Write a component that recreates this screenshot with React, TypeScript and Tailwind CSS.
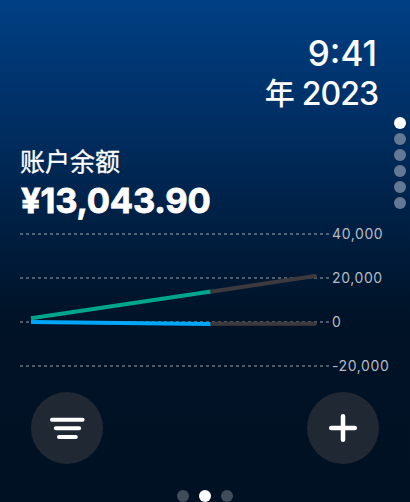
const axisLabels = ['40,000', '20,000', '0', '-20,000'];
const sideDots = [0, 1, 2, 3, 4, 5];
const pageDots = [0, 1, 2];

const StatusHeader = () => (
    <header className="h-[141px] pt-[32px] pr-[32px] flex flex-col items-end font-medium text-white">
        <div className="h-[42px] leading-[42px] text-[35px] tracking-[0px] pr-[1px]">9:41</div>
        <div className="h-[40px] leading-[39px] text-[32px] tracking-[-1px] flex">
            <span className="text-[30px]">年</span>
            <span className="ml-[8px]">2023</span>
        </div>
    </header>
);

const BalanceChart = () => (
    <div className="h-[162px] pl-5 flex">
        <svg className="w-[310px] h-[162px] shrink-0" viewBox="20 219 310 162" fill="none">
            {[234, 278, 322, 366].map((y) => (
                <path key={y} d={`M20 ${y}H329`} stroke="#fff" strokeOpacity="0.31" strokeWidth="2" strokeDasharray="3 3" />
            ))}
            {/* Actual values */}
            <path d="M31 318.3L211 291.5" stroke="#00a68c" strokeWidth="4" />
            <path d="M31 322L211 324" stroke="#00a6f8" strokeWidth="4" />
            {/* Forecast */}
            <path d="M212 291.5L315 276M212 323.7H315" stroke="#3c3a3c" strokeWidth="4" strokeLinecap="round" />
        </svg>
        <div className="ml-[2px] pt-[4px] flex flex-col gap-6 text-[14px] leading-5 tracking-[0.6px] text-[#b4bbc5] whitespace-nowrap">
            {axisLabels.map((label) => (
                <span key={label} className="h-5 pt-[1px]">{label}</span>
            ))}
        </div>
    </div>
);

export default function App() {
    return (
        <div className="relative w-[410px] h-[502px] overflow-hidden bg-[linear-gradient(180deg,#003f84_0%,#002d60_26%,#001f42_45%,#001226_64%,#001123_100%)] font-['Inter','Noto_Sans_CJK_SC',sans-serif]">
            <StatusHeader />

            <section className="h-[78px] pl-5 text-white">
                <h1 className="h-[39px] leading-[43px] text-[25px] font-normal [-webkit-text-stroke:0.3px_white]">账户余额</h1>
                <p className="h-[39px] leading-[41px] pl-[1px] text-[34.5px] font-bold tracking-[-0.2px] [-webkit-text-stroke:0.8px_white] [stroke-linejoin:round]">¥13,043.90</p>
            </section>

            <BalanceChart />

            <div className="mt-[11px] px-[31px] flex justify-between">
                <button className="size-[72px] rounded-full bg-[#202933]" aria-label="Filter">
                    <svg className="size-[72px]" viewBox="0 0 72 72" stroke="#fff" strokeWidth="4" strokeLinecap="round">
                        <path d="M21 27.7H51.6M24.8 36.3H48.2M28 44.9H44.8" />
                    </svg>
                </button>
                <button className="size-[72px] rounded-full bg-[#202933]" aria-label="Add">
                    <svg className="size-[72px]" viewBox="0 0 72 72" stroke="#fff" strokeWidth="4.5" strokeLinecap="round">
                        <path d="M24.2 36H47.8M36 24.2V47.8" />
                    </svg>
                </button>
            </div>

            <div className="mt-[26px] flex justify-center gap-[10px]">
                {pageDots.map((dot) => (
                    <span key={dot} className={`size-3 shrink-0 rounded-full ${dot === 1 ? 'bg-white' : 'bg-[#404c5a]'}`} />
                ))}
            </div>

            {/* Vertical page indicator over the right edge */}
            <div className="absolute top-[117px] right-[4px] flex flex-col gap-1">
                {sideDots.map((dot) => (
                    <span key={dot} className={`size-3 rounded-full ${dot === 0 ? 'bg-white' : 'bg-[#627893]'}`} />
                ))}
            </div>
        </div>
    );
}
